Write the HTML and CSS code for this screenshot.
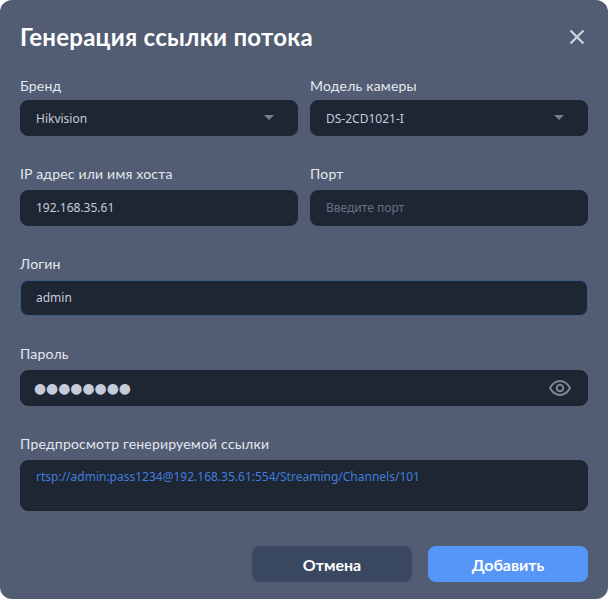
FILE: index.html
```html
<!DOCTYPE html>
<html lang="en">

<head>
  <meta charset="UTF-8">
  <meta name="viewport" content="width=device-width, initial-scale=1.0">
  <title>Генерация ссылки потока</title>
  <link rel="stylesheet" href="styles.css">
</head>

<body>

  <div class="modal">
    <div class="modal-head">
      <h1>Генерация ссылки потока</h1>
      <button class="close-btn" aria-label="Закрыть">
        <svg width="16" height="16" viewBox="0 0 16 16">
          <path d="M1.500 1.500L14.500 14.500M14.500 1.500L1.500 14.500" />
        </svg>
      </button>
    </div>

    <div class="form">
      <div class="row row-top">
        <div class="field">
          <label>Бренд</label>
          <div class="control select"><span>Hikvision</span><i class="arrow"></i></div>
        </div>
        <div class="field">
          <label>Модель камеры</label>
          <div class="control select"><span>DS-2CD1021-I</span><i class="arrow"></i></div>
        </div>
      </div>

      <div class="row">
        <div class="field">
          <label>IP адрес или имя хоста</label>
          <input class="control" type="text" value="192.168.35.61">
        </div>
        <div class="field">
          <label>Порт</label>
          <input class="control" type="text" placeholder="Введите порт">
        </div>
      </div>

      <div class="field">
        <label>Логин</label>
        <input class="control focused" type="text" value="admin">
      </div>

      <div class="field">
        <label>Пароль</label>
        <div class="control password">
          <span class="dots">●●●●●●●●</span>
          <svg class="eye" width="22" height="16" viewBox="0 0 22 16">
            <path d="M1 8C3.500 3.500 7 1 11 1S18.500 3.500 21 8C18.500 12.500 15 15 11 15S3.500 12.500 1 8Z" />
            <circle cx="11" cy="8" r="3.300" />
          </svg>
        </div>
      </div>

      <div class="field">
        <label>Предпросмотр генерируемой ссылки</label>
        <div class="control preview">rtsp://admin:pass1234@192.168.35.61:554/Streaming/Channels/101</div>
      </div>
    </div>

    <div class="actions">
      <button class="btn btn-cancel">Отмена</button>
      <button class="btn btn-add">Добавить</button>
    </div>
  </div>

</body>

</html>
```

FILE: styles.css
```css
* {
  box-sizing: border-box;
}

body {
  margin: 0;
  background: #fff;
  font-family: "Noto Sans", sans-serif;
}

h1 {
  margin: 0;
  font-family: Lato, sans-serif;
  font-size: 24px;
  font-weight: 700;
  line-height: 34px;
  letter-spacing: 0.27px;
  color: #fff;
}

label {
  display: block;
  height: 20px;
  margin-bottom: 4px;
  font-family: Lato, sans-serif;
  font-size: 14px;
  line-height: 16px;
  letter-spacing: 0.2px;
  color: #e4e8f0;
}

input {
  outline: none;
  width: 100%;
  padding-bottom: 2px;
}

input::placeholder {
  color: #667085;
  opacity: 1;
}

.modal {
  width: 608px;
  height: 599px;
  padding: 20px;
  background: #525d73;
  border-radius: 12px;
}

.modal-head {
  display: flex;
  justify-content: space-between;
  align-items: center;
  margin-bottom: 22px;
}

.close-btn {
  display: flex;
  padding: 0;
  margin-right: 3px;
  background: none;
  border: none;
}

.close-btn path {
  fill: none;
  stroke: #cfd4df;
  stroke-width: 2.200;
}

.form {
  display: flex;
  flex-direction: column;
  gap: 30px;
}

.row-top label {
  line-height: 20px;
}

.row {
  display: grid;
  grid-template-columns: 1fr 1fr;
  gap: 12px;
}

.control {
  display: flex;
  align-items: center;
  height: 36px;
  padding-left: 15px;
  padding-right: 15px;
  background: #1f2633;
  border: 1px solid #1f2633;
  border-radius: 8px;
  font-family: "Noto Sans", sans-serif;
  font-size: 12px;
  color: #c5cbdb;
}

.focused {
  border-color: #3f5c8c;
}

.select {
  justify-content: space-between;
}

.arrow {
  width: 0;
  height: 0;
  margin: -2px 8px 0 0;
  border-left: 5px solid transparent;
  border-right: 5px solid transparent;
  border-top: 5px solid #767d8c;
}

.password {
  justify-content: space-between;
  padding: 0 16px 0 13px;
}

.dots {
  font-family: "DejaVu Sans", sans-serif;
  font-size: 13.900px;
  color: #c5cbdb;
}

.eye path,
.eye circle {
  fill: none;
  stroke: #7e8594;
  stroke-width: 2;
}

.preview {
  align-items: flex-start;
  height: 51px;
  padding-top: 7px;
  color: #3f7ede;
}

.actions {
  display: flex;
  justify-content: flex-end;
  gap: 16px;
  margin-top: 35px;
}

.btn {
  width: 160px;
  height: 36px;
  border: none;
  border-radius: 8px;
  font-family: Lato, sans-serif;
  font-size: 16px;
  font-weight: 700;
  color: #fff;
}

.btn-cancel {
  background: #3a4760;
}

.btn-add {
  background: #5596f6;
}
```
